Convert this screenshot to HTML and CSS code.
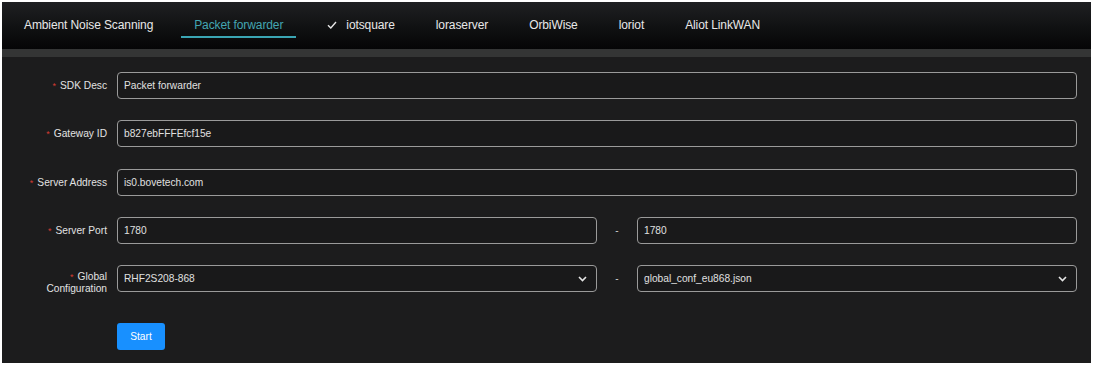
FILE: index.html
```html
<!DOCTYPE html>
<html>
<head>
<meta charset="utf-8">
<link rel="stylesheet" href="styles.css">
</head>
<body>
<div class="app">
  <div class="header">
    <div class="tab">Ambient Noise Scanning</div>
    <div class="tab active">Packet forwarder</div>
    <div class="tab"><svg class="check" width="10" height="8" viewBox="0 0 10 8"><path d="M1 4.2 L3.8 7 L9 1" fill="none" stroke="#e6e6e6" stroke-width="1.4"/></svg>iotsquare</div>
    <div class="tab">loraserver</div>
    <div class="tab">OrbiWise</div>
    <div class="tab">loriot</div>
    <div class="tab">Aliot LinkWAN</div>
  </div>
  <div class="band"></div>
  <div class="content">
    <div class="row">
      <div class="label"><span class="req">*</span>SDK Desc</div>
      <div class="field"><div class="input">Packet forwarder</div></div>
    </div>
    <div class="row">
      <div class="label"><span class="req">*</span>Gateway ID</div>
      <div class="field"><div class="input">b827ebFFFEfcf15e</div></div>
    </div>
    <div class="row">
      <div class="label"><span class="req">*</span>Server Address</div>
      <div class="field"><div class="input">is0.bovetech.com</div></div>
    </div>
    <div class="row">
      <div class="label"><span class="req">*</span>Server Port</div>
      <div class="field split">
        <div class="input left">1780</div>
        <div class="dash">-</div>
        <div class="input right">1780</div>
      </div>
    </div>
    <div class="row">
      <div class="label twoline"><div><span class="req">*</span>Global</div><div>Configuration</div></div>
      <div class="field split">
        <div class="input left select"><span>RHF2S208-868</span><svg width="9" height="6" viewBox="0 0 9 6"><path d="M1 1 L4.5 4.5 L8 1" fill="none" stroke="#e6e6e6" stroke-width="1.6"/></svg></div>
        <div class="dash">-</div>
        <div class="input right select"><span>global_conf_eu868.json</span><svg width="9" height="6" viewBox="0 0 9 6"><path d="M1 1 L4.5 4.5 L8 1" fill="none" stroke="#e6e6e6" stroke-width="1.6"/></svg></div>
      </div>
    </div>
    <div class="row btnrow">
      <div class="label"></div>
      <div class="field"><div class="btn">Start</div></div>
    </div>
  </div>
</div>
</body>
</html>
```
FILE: styles.css
```css
html, body {
  margin: 0;
  padding: 0;
  background: #ffffff;
}
body {
  font-family: "Liberation Sans", Arial, sans-serif;
}
.app {
  margin: 2px 0 0 2px;
  width: 1089px;
  height: 361px;
  display: flex;
  flex-direction: column;
  background: #1c1c1d;
}
.header {
  height: 47px;
  flex: none;
  display: flex;
  align-items: flex-start;
  padding-left: 9px;
  background: linear-gradient(to bottom, #1f2022 0%, #101112 55%, #050506 100%);
}
.tab {
  margin-right: 15px;
  padding: 16px 13px 4px;
  line-height: 14px;
  font-size: 12px;
  color: #e8e8e8;
  letter-spacing: -0.1px;
  border-bottom: 2px solid transparent;
  display: flex;
  align-items: center;
  white-space: nowrap;
}
.tab.active {
  color: #43a6b2;
  border-bottom-color: #3aa5b3;
}
.check {
  margin-left: 3px;
  margin-right: 9px;
}
.band {
  height: 8px;
  flex: none;
  background: #343535;
}
.content {
  flex: 1;
  padding: 15px 14px 0 0;
  display: flex;
  flex-direction: column;
  gap: 21.25px;
  background: #1c1c1d;
}
.row {
  display: flex;
  align-items: center;
  height: 27px;
}
.btnrow {
  margin-top: 9.75px;
}
.label {
  flex: none;
  width: 115px;
  box-sizing: border-box;
  padding-right: 10px;
  text-align: right;
  font-size: 10.2px;
  color: #e2e2e2;
}
.label.twoline {
  align-self: flex-start;
  padding-top: 6px;
  line-height: 12px;
}
.req {
  color: #d43b32;
  margin-right: 4px;
  font-size: 9px;
}
.field {
  flex: 1;
  display: flex;
  height: 27px;
}
.input {
  flex: 1;
  box-sizing: border-box;
  height: 27px;
  border: 1px solid #9a9a9a;
  border-radius: 4px;
  background: #19191a;
  color: #e0e0e0;
  font-size: 10.2px;
  padding: 0 9px 0 6px;
  display: flex;
  align-items: center;
  justify-content: space-between;
}
.input.left {
  flex: none;
  width: 480px;
}
.input.right {
  flex: none;
  width: 440px;
}
.dash {
  width: 40px;
  flex: none;
  color: #cfcfcf;
  font-size: 10px;
  display: flex;
  align-items: center;
  justify-content: center;
}
.btn {
  width: 48px;
  height: 27px;
  border-radius: 3px;
  background: #1890ff;
  color: #ffffff;
  font-size: 10.2px;
  display: flex;
  align-items: center;
  justify-content: center;
}
```
